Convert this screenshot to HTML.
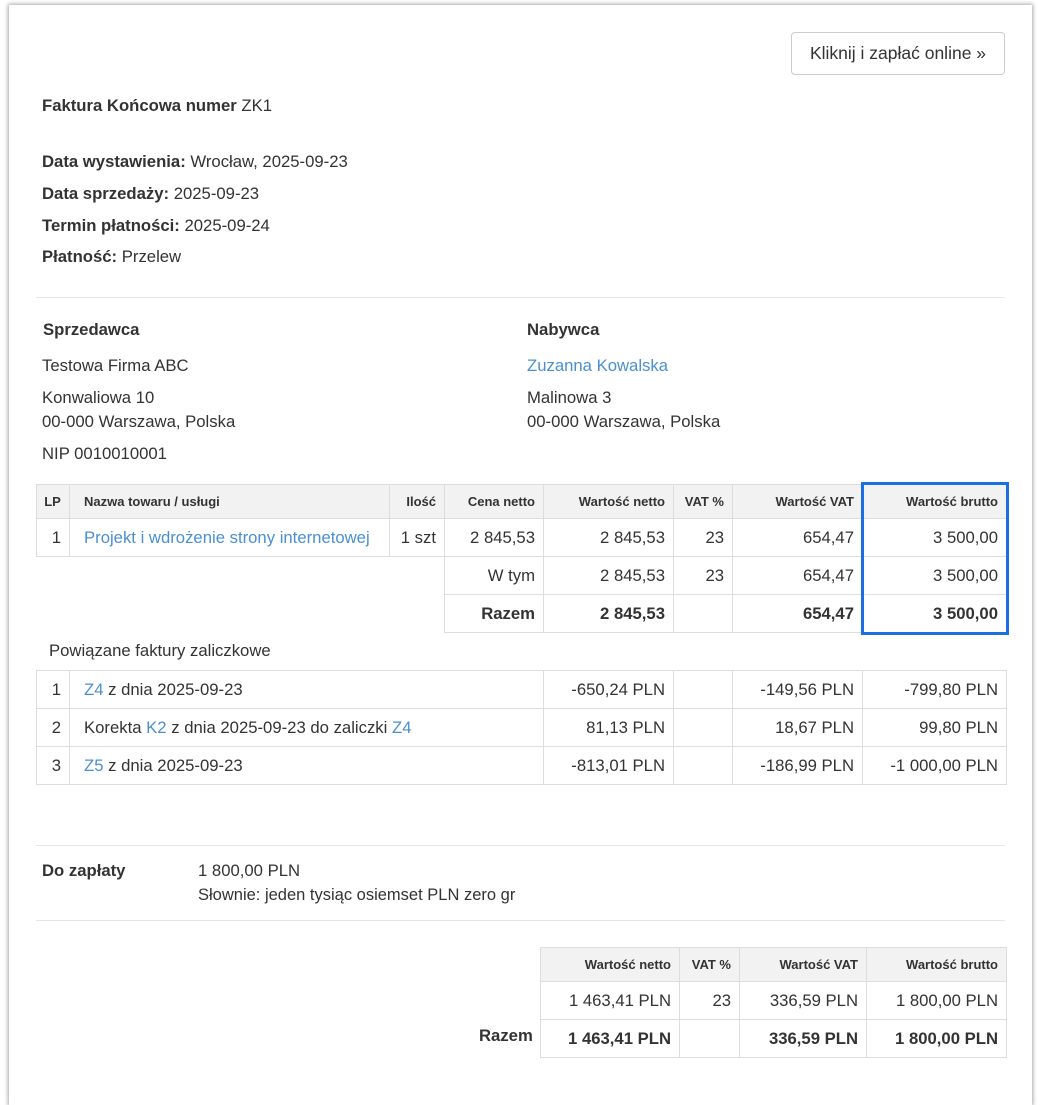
<!DOCTYPE html>
<html><head><meta charset="utf-8">
<style>
body{margin:0;width:1041px;height:1080px;background:#fff;overflow:hidden;font-family:"Liberation Sans",Arial,sans-serif;color:#333;position:relative}
.page{position:absolute;left:9px;top:5px;width:1023px;height:1100px;background:#fff;box-shadow:0 0 4px 1px rgba(0,0,0,.35)}
.a{position:absolute;white-space:nowrap;font-size:16.7px;line-height:24px}
b{font-weight:bold}
.lnk{color:#4a90d0}
.hr{position:absolute;left:36px;width:969px;height:1px;background:#e6e6e6}
table{position:absolute;border-collapse:collapse;table-layout:fixed;font-size:16.7px}
td,th{border:1px solid #ddd;padding:0 8px 0 7px;text-align:right;white-space:nowrap;overflow:hidden}
th{background:#f2f2f2;font-size:13px;font-weight:bold;height:33px}
td{height:37px}
.l{text-align:left;padding-left:14px}
.n{border:none}
.btn{position:absolute;left:791px;top:32px;width:214px;height:43px;border:1px solid #ccc;border-radius:4px;box-sizing:border-box;font-size:17.5px;line-height:41px;text-align:center;color:#333}
.box{position:absolute;left:861px;top:482px;width:142px;height:147px;border:3px solid #1b6fe3}
</style></head><body>
<div class="page"></div>
<div class="btn">Kliknij i zapłać online »</div>
<div class="a" style="left:42px;top:94px"><b>Faktura Końcowa numer</b> ZK1</div>
<div class="a" style="left:42px;top:150px"><b>Data wystawienia:</b> Wrocław, 2025-09-23</div>
<div class="a" style="left:42px;top:182px"><b>Data sprzedaży:</b> 2025-09-23</div>
<div class="a" style="left:42px;top:214px"><b>Termin płatności:</b> 2025-09-24</div>
<div class="a" style="left:42px;top:245px"><b>Płatność:</b> Przelew</div>
<div class="hr" style="top:297px"></div>
<div class="a" style="left:43px;top:318px"><b>Sprzedawca</b></div>
<div class="a" style="left:42px;top:354px">Testowa Firma ABC</div>
<div class="a" style="left:42px;top:386px">Konwaliowa 10<br>00-000 Warszawa, Polska</div>
<div class="a" style="left:42px;top:442px">NIP 0010010001</div>
<div class="a" style="left:527px;top:318px"><b>Nabywca</b></div>
<div class="a lnk" style="left:527px;top:354px">Zuzanna Kowalska</div>
<div class="a" style="left:527px;top:386px">Malinowa 3<br>00-000 Warszawa, Polska</div>

<table style="left:36px;top:484px;width:970px">
<colgroup><col style="width:33px"><col style="width:320px"><col style="width:55px"><col style="width:99px"><col style="width:130px"><col style="width:59px"><col style="width:130px"><col style="width:144px"></colgroup>
<tr><th style="text-align:center">LP</th><th class="l">Nazwa towaru / usługi</th><th>Ilość</th><th>Cena netto</th><th>Wartość netto</th><th>VAT %</th><th>Wartość VAT</th><th>Wartość brutto</th></tr>
<tr><td>1</td><td class="l lnk">Projekt i wdrożenie strony internetowej</td><td>1 szt</td><td>2 845,53</td><td>2 845,53</td><td>23</td><td>654,47</td><td>3 500,00</td></tr>
<tr><td class="n"></td><td class="n"></td><td class="n" style="border-right:1px solid #ddd"></td><td>W tym</td><td>2 845,53</td><td>23</td><td>654,47</td><td>3 500,00</td></tr>
<tr><td class="n"></td><td class="n"></td><td class="n" style="border-right:1px solid #ddd"></td><td><b>Razem</b></td><td><b>2 845,53</b></td><td></td><td><b>654,47</b></td><td><b>3 500,00</b></td></tr>
</table>
<div class="box"></div>
<div class="a" style="left:49px;top:639px">Powiązane faktury zaliczkowe</div>
<table style="left:36px;top:670px;width:970px">
<colgroup><col style="width:33px"><col style="width:474px"><col style="width:130px"><col style="width:59px"><col style="width:130px"><col style="width:144px"></colgroup>
<tr><td>1</td><td class="l"><span class="lnk">Z4</span> z dnia 2025-09-23</td><td>-650,24 PLN</td><td></td><td>-149,56 PLN</td><td>-799,80 PLN</td></tr>
<tr><td>2</td><td class="l">Korekta <span class="lnk">K2</span> z dnia 2025-09-23 do zaliczki <span class="lnk">Z4</span></td><td>81,13 PLN</td><td></td><td>18,67 PLN</td><td>99,80 PLN</td></tr>
<tr><td>3</td><td class="l"><span class="lnk">Z5</span> z dnia 2025-09-23</td><td>-813,01 PLN</td><td></td><td>-186,99 PLN</td><td>-1 000,00 PLN</td></tr>
</table>
<div class="hr" style="top:845px"></div>
<div class="a" style="left:42px;top:859px"><b>Do zapłaty</b></div>
<div class="a" style="left:198px;top:859px">1 800,00 PLN</div>
<div class="a" style="left:198px;top:883px;font-size:16.5px">Słownie: jeden tysiąc osiemset PLN zero gr</div>
<div class="hr" style="top:920px"></div>
<div class="a" style="left:479px;top:1024px"><b>Razem</b></div>
<table style="left:540px;top:947px;width:466px">
<colgroup><col style="width:139px"><col style="width:60px"><col style="width:127px"><col style="width:140px"></colgroup>
<tr><th>Wartość netto</th><th>VAT %</th><th>Wartość VAT</th><th>Wartość brutto</th></tr>
<tr><td>1 463,41 PLN</td><td>23</td><td>336,59 PLN</td><td>1 800,00 PLN</td></tr>
<tr><td><b>1 463,41 PLN</b></td><td></td><td><b>336,59 PLN</b></td><td><b>1 800,00 PLN</b></td></tr>
</table>
</body></html>
